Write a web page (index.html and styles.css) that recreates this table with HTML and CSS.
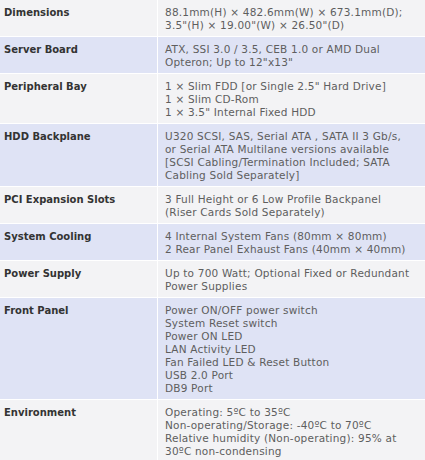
FILE: index.html
```html
<!DOCTYPE html>
<html>
<head>
<meta charset="utf-8">
<link rel="stylesheet" href="styles.css">
</head>
<body>
<div class="specs">
  <div class="row odd"><div class="label">Dimensions</div><div class="value">88.1mm(H) × 482.6mm(W) × 673.1mm(D);<br>3.5"(H) × 19.00"(W) × 26.50"(D)</div></div>
  <div class="row even"><div class="label">Server Board</div><div class="value">ATX, SSI 3.0 / 3.5, CEB 1.0 or AMD Dual<br>Opteron; Up to 12"x13"</div></div>
  <div class="row odd"><div class="label">Peripheral Bay</div><div class="value">1 × Slim FDD [or Single 2.5" Hard Drive]<br>1 × Slim CD-Rom<br>1 × 3.5" Internal Fixed HDD</div></div>
  <div class="row even"><div class="label">HDD Backplane</div><div class="value">U320 SCSI, SAS, Serial ATA , SATA II 3 Gb/s,<br>or Serial ATA Multilane versions available<br>[SCSI Cabling/Termination Included; SATA<br>Cabling Sold Separately]</div></div>
  <div class="row odd"><div class="label">PCI Expansion Slots</div><div class="value">3 Full Height or 6 Low Profile Backpanel<br>(Riser Cards Sold Separately)</div></div>
  <div class="row even"><div class="label">System Cooling</div><div class="value">4 Internal System Fans (80mm × 80mm)<br>2 Rear Panel Exhaust Fans (40mm × 40mm)</div></div>
  <div class="row odd"><div class="label">Power Supply</div><div class="value">Up to 700 Watt; Optional Fixed or Redundant<br>Power Supplies</div></div>
  <div class="row even"><div class="label">Front Panel</div><div class="value">Power ON/OFF power switch<br>System Reset switch<br>Power ON LED<br>LAN Activity LED<br>Fan Failed LED &amp; Reset Button<br>USB 2.0 Port<br>DB9 Port</div></div>
  <div class="row odd"><div class="label">Environment</div><div class="value">Operating: 5ºC to 35ºC<br>Non-operating/Storage: -40ºC to 70ºC<br>Relative humidity (Non-operating): 95% at<br>30ºC non-condensing</div></div>
</div>
</body>
</html>
```
FILE: styles.css
```css
html, body {
  margin: 0;
  padding: 0;
  background: #ffffff;
}
.specs {
  width: 425px;
  font-family: "DejaVu Sans", Verdana, sans-serif;
}
.row {
  display: grid;
  grid-template-columns: 157px 1fr;
  column-gap: 1px;
  margin-bottom: 1px;
  background: #ffffff;
}
.label, .value {
  padding: 6px 0 4px 4px;
  line-height: 13px;
}
.label {
  font-weight: bold;
  font-size: 10px;
  color: #333333;
}
.value {
  padding-left: 7px;
  font-size: 10.5px;
  letter-spacing: 0.2px;
  color: #5e5e5e;
  white-space: nowrap;
  overflow: hidden;
}
.odd .label, .odd .value {
  background: #f3f3f5;
}
.even .label, .even .value {
  background: #dfe3f5;
}
```
